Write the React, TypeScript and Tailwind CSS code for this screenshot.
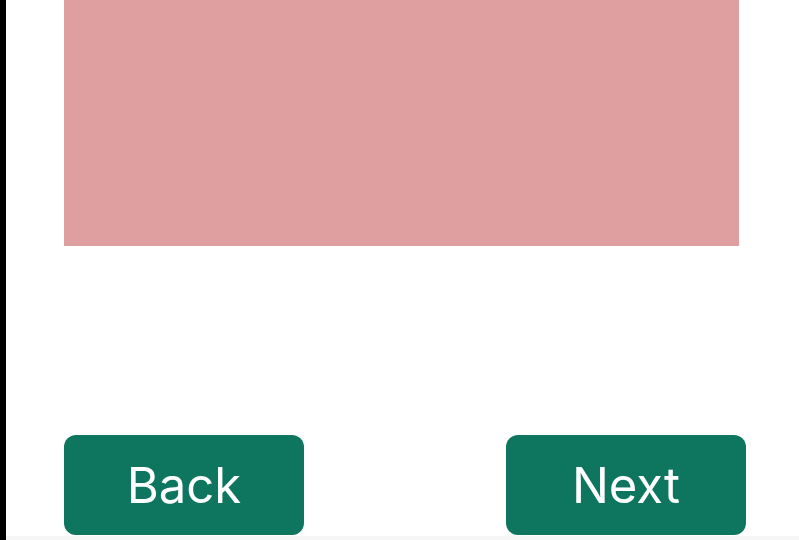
import React from "react";

const NavButton: React.FC<{ label: string }> = ({ label }) => (
    <button className="w-[240px] h-[100px] rounded-[12px] bg-[#0e765f] flex items-center justify-center">
        <span className="text-white text-[49px] leading-none font-normal font-['Inter',sans-serif]">
            {label}
        </span>
    </button>
);

export default function App() {
    return (
        <div className="flex w-[799px] h-[540px] overflow-hidden bg-white">
            <div className="w-[6px] bg-black" />
            <div className="flex-1 flex flex-col">
                <div className="pl-[58px] pr-[60px]">
                    <div className="h-[246px] bg-[#df9fa1]" />
                </div>
                <div className="flex-1" />
                <div className="flex justify-between pl-[58px] pr-[53px] mb-[1px]">
                    <NavButton label="Back" />
                    <NavButton label="Next" />
                </div>
                <div className="h-[4px] bg-[#f6f6f6]" />
            </div>
        </div>
    );
}
